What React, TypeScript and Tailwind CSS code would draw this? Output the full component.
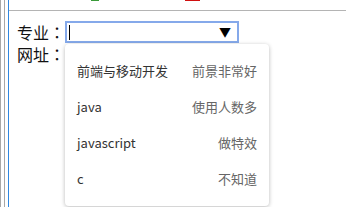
import { useState } from 'react';

const options = [
  { label: '前端与移动开发', note: '前景非常好' },
  { label: 'java', note: '使用人数多' },
  { label: 'javascript', note: '做特效' },
  { label: 'c', note: '不知道' },
];

// 冒号居中显示（繁体字形）
const Colon = () => (
  <span className="inline-block w-[16px] text-center font-['Noto_Sans_CJK_TC',sans-serif]">：</span>
);

export default function App() {
  const [value] = useState('');

  return (
    <div className="relative flex h-[207px] w-[346px] overflow-hidden bg-white font-['Microsoft_YaHei','Noto_Sans_CJK_SC',sans-serif]">
      {/* 左侧边框线 */}
      <div className="w-px bg-[#a8a8a8]" />
      <div className="ml-[3px] w-px bg-[#a8a8a8]" />
      <div className="ml-[3px] w-px bg-[#2f87e0]" />

      <div className="flex flex-1 flex-col">
        {/* 顶部工具栏残余 */}
        <div className="relative h-[11px] border-b border-[#b4b4b4]">
          <div className="absolute left-[82px] top-0 h-[1px] w-[8px] bg-[#3a9a3a]" />
          <div className="absolute left-[176px] top-0 h-[1px] w-[15px] bg-[#d01010]" />
        </div>

        <div className="flex flex-col pl-[8px] pt-[9px] text-[16px] leading-[24px] text-[#111]">
          <div className="flex items-center">
            <span className="w-[48px] whitespace-nowrap">
              专业<Colon />
            </span>
            <div className="flex h-[22px] w-[174px] items-center justify-between border-2 border-[#85a9ea] pl-[2px] pr-[6px]">
              <span className="h-[15px] w-px bg-black">{value}</span>
              <span className="text-[12px] leading-none text-black">▼</span>
            </div>
          </div>
          <div className="-mt-[2px] flex items-center">
            <span className="whitespace-nowrap">
              网址<Colon />
            </span>
          </div>
        </div>
      </div>

      {/* 下拉菜单 */}
      <div className="absolute left-[65px] top-[44px] w-[204px] rounded-[4px] bg-white py-[9px] shadow-[0_1px_4px_rgba(0,0,0,0.28)]">
        {options.map((o) => (
          <div key={o.label} className="flex h-[36px] items-center justify-between px-[12px] text-[13px]">
            <span className="text-[#333]">{o.label}</span>
            <span className="text-[#666]">{o.note}</span>
          </div>
        ))}
      </div>
    </div>
  );
}
